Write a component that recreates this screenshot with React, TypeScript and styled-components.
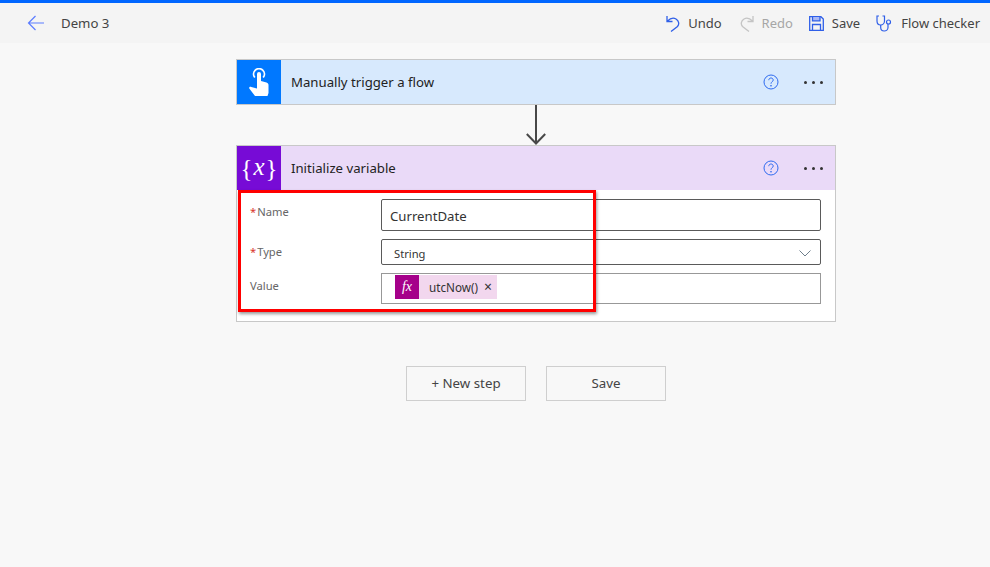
import React from "react";
import styled, { createGlobalStyle } from "styled-components";

const GlobalStyle = createGlobalStyle`
  html, body {
    margin: 0;
    padding: 0;
    height: 100%;
    background: #f8f8f8;
    font-family: "Noto Sans", "Open Sans", "Liberation Sans", sans-serif;
    overflow: hidden;
  }
`;

const Page = styled.div`
  min-height: 567px;
  background: #f8f8f8;
  border-top: 3px solid #0066ff;
  box-sizing: border-box;
`;

const Toolbar = styled.header`
  display: flex;
  align-items: center;
  justify-content: space-between;
  height: 40px;
  background: #f4f4f4;
  padding: 0 10px 0 27px;
`;

const TitleGroup = styled.div`
  display: flex;
  align-items: center;
  gap: 16px;
`;

const FlowName = styled.span`
  font-size: 13.2px;
  color: #444;
`;

const Actions = styled.div`
  display: flex;
  align-items: center;
  gap: 16px;
`;

const Action = styled.div<{ $disabled?: boolean; $trail?: number }>`
  display: flex;
  align-items: center;
  gap: 8px;
  margin-right: ${(p) => p.$trail ?? 0}px;
  font-size: 13px;
  color: ${(p) => (p.$disabled ? "#a6a6a6" : "#444")};
`;

const Canvas = styled.main`
  width: 600px;
  margin: 16px 0 0 236px;
`;

const Card = styled.section`
  position: relative;
  border: 1px solid #c8c8c8;
  background: #fff;
`;

const CardHeader = styled.div<{ $tint: string }>`
  display: flex;
  align-items: center;
  height: 44px;
  background: ${(p) => p.$tint};
`;

const IconBox = styled.div<{ $color: string }>`
  display: flex;
  align-items: center;
  justify-content: center;
  width: 44px;
  height: 44px;
  background: ${(p) => p.$color};
`;

const VariableMark = styled.div`
  display: flex;
  align-items: center;
  gap: 1px;
  color: #fff;
  font-family: "Liberation Serif", serif;
  font-size: 25px;
  line-height: 1;
  em {
    font-size: 25px;
    margin-top: -3px;
  }
`;

const CardTitle = styled.h2`
  flex: 1;
  margin: 0 0 0 10px;
  font-size: 13.2px;
  font-weight: 400;
  color: #222;
`;

const HeaderTools = styled.div`
  display: flex;
  align-items: center;
  gap: 25px;
  padding-right: 12px;
`;

const Dots = styled.div`
  display: flex;
  gap: 5px;
  span {
    width: 3px;
    height: 3px;
    border-radius: 50%;
    background: #333;
  }
`;

const Connector = styled.div`
  display: flex;
  justify-content: center;
  height: 40px;
`;

const Form = styled.div`
  display: flex;
  flex-direction: column;
  gap: 8px;
  padding: 9px 14px 17px 13px;
`;

const Row = styled.div`
  display: grid;
  grid-template-columns: 131px 1fr;
`;

const Label = styled.label`
  padding-top: 5px;
  font-size: 11.2px;
  line-height: 16px;
  color: #666;
`;

const Required = styled.span`
  color: #d9342b;
  margin-right: 1px;
`;

const Field = styled.div<{ $height: number; $soft?: boolean }>`
  display: flex;
  align-items: center;
  justify-content: space-between;
  box-sizing: border-box;
  height: ${(p) => p.$height}px;
  border: 1px solid ${(p) => (p.$soft ? "#989898" : "#5a5a5a")};
  border-radius: ${(p) => (p.$soft ? 0 : "2px")};
  background: #fff;
`;

const FieldText = styled.span<{ $size: number; $left: number }>`
  font-size: ${(p) => p.$size}px;
  margin: 2px 0 0 ${(p) => p.$left}px;
  color: #333;
`;

const Chevron = styled.span`
  display: flex;
  margin: 2px 9px 0 0;
`;

const Token = styled.div`
  display: flex;
  align-items: center;
  align-self: flex-start;
  height: 24px;
  margin: 1px 0 0 13px;
  background: #f2d7ee;
`;

const TokenIcon = styled.div`
  display: flex;
  align-items: center;
  justify-content: center;
  width: 24px;
  height: 24px;
  background: #a5008a;
  color: #fff;
  font-family: "Liberation Serif", serif;
  font-style: italic;
  font-size: 14px;
`;

const TokenText = styled.span`
  margin: 0 6px 0 10px;
  font-size: 11.7px;
  color: #333;
`;

const TokenClose = styled.span`
  margin-right: 5px;
  font-size: 14px;
  line-height: 1;
  color: #333;
`;

const Highlight = styled.div`
  position: absolute;
  left: 1px;
  top: 44px;
  width: 358px;
  height: 122px;
  box-sizing: border-box;
  border: 3px solid #ff0000;
  box-shadow: 1px 2px 3px rgba(0, 0, 0, 0.4);
  pointer-events: none;
`;

const Buttons = styled.div`
  display: flex;
  justify-content: center;
  gap: 20px;
  margin-top: 44px;
`;

const Button = styled.button`
  width: 120px;
  height: 35px;
  padding: 0 0 2px;
  border: 1px solid #cfcfcf;
  background: #f8f8f8;
  font-family: inherit;
  font-size: 13.3px;
  color: #444;
`;

const BackIcon = () => (
  <svg width="18" height="16" viewBox="0 0 18 16" fill="none" stroke="#5b7cff" strokeWidth="1.2">
    <path d="M17 8H2M8.5 1 1.500 8l7 7" />
  </svg>
);

const UndoIcon = () => (
  <svg width="14" height="17" viewBox="0 0 14 17" fill="none" stroke="#2f5fe8" strokeWidth="1.3">
    <path d="M1 1v5.500h5.500M1.500 6C4 3.500 7.500 2.500 10 4c3 2 3.500 5 1.500 7.500L5 16.500" />
  </svg>
);

const RedoIcon = () => (
  <svg width="14" height="17" viewBox="0 0 14 17" fill="none" stroke="#c4c4c4" strokeWidth="1.3">
    <path d="M13 1v5.500H7.500M12.500 6C10 3.500 6.500 2.500 4 4c-3 2-3.500 5-1.500 7.500L9 16.500" />
  </svg>
);

const SaveIcon = () => (
  <svg width="15" height="15" viewBox="0 0 15 15" fill="none" stroke="#2f5fe8" strokeWidth="1.3">
    <path d="M.7.7h11.200l2.400 2.400v11.200H.7z" />
    <path d="M3.500 1v3.800h7.500V1" fill="#a9b8f5" />
    <path d="M3.500 14V8.500h8V14" />
  </svg>
);

const StethoscopeIcon = () => (
  <svg width="17" height="17" viewBox="0 0 17 17" fill="none" stroke="#2f5fe8" strokeWidth="1.2">
    <path d="M3 1H1v5c0 2.500 1.800 4 3.700 4s3.800-1.500 3.800-4V1h-2" />
    <path d="M4.700 10v2.500c0 2 1.500 3.500 3.500 3.500s3.800-1.500 3.800-3.500V9" />
    <circle cx="12.500" cy="7" r="2" />
  </svg>
);

const TouchIcon = () => (
  <svg width="20" height="28" viewBox="0 0 20 28">
    <path
      d="M8 6a2 2 0 0 1 4 0v7l5.500 1.500c1.300.4 2 1.300 2 2.500v8l-1 3H6L.3 20.500c-.5-1 .5-2 2-1.500l5.700 1.500z"
      fill="#fff"
    />
    <path d="M5.800 9.500a5.400 5.400 0 1 1 8.400 0" fill="none" stroke="#fff" strokeWidth="1.800" />
  </svg>
);

const HelpIcon = () => (
  <svg width="16" height="16" viewBox="0 0 16 16" fill="none" stroke="#2f6bf0" strokeWidth="1">
    <circle cx="8" cy="8" r="7" />
    <path d="M5.800 6.200C5.800 4.800 6.800 4 8 4s2.200.8 2.200 2c0 1.800-2.200 1.800-2.200 3.700" />
    <circle cx="8" cy="11.800" r=".4" fill="#2f6bf0" />
  </svg>
);

const ChevronIcon = () => (
  <svg width="12" height="7" viewBox="0 0 12 7" fill="none" stroke="#6f7f8c" strokeWidth="1">
    <path d="M.5.500 6 6l5.500-5.500" />
  </svg>
);

const ArrowDown = () => (
  <svg width="20" height="40" viewBox="0 0 20 40" fill="none" stroke="#484848" strokeWidth="2">
    <path d="M10 0v38M.8 29 10 38.500 19.200 29" />
  </svg>
);

const HeaderActions = () => (
  <HeaderTools>
    <HelpIcon />
    <Dots>
      <span />
      <span />
      <span />
    </Dots>
  </HeaderTools>
);

export default function App() {
  return (
    <>
      <GlobalStyle />
      <Page>
        <Toolbar>
          <TitleGroup>
            <BackIcon />
            <FlowName>Demo 3</FlowName>
          </TitleGroup>
          <Actions>
            <Action $trail={2}>
              <UndoIcon />
              Undo
            </Action>
            <Action $disabled>
              <RedoIcon />
              Redo
            </Action>
            <Action>
              <SaveIcon />
              Save
            </Action>
            <Action>
              <StethoscopeIcon />
              Flow checker
            </Action>
          </Actions>
        </Toolbar>

        <Canvas>
          <Card>
            <CardHeader $tint="#d7e9fd">
              <IconBox $color="#0078ff">
                <TouchIcon />
              </IconBox>
              <CardTitle>Manually trigger a flow</CardTitle>
              <HeaderActions />
            </CardHeader>
          </Card>

          <Connector>
            <ArrowDown />
          </Connector>

          <Card>
            <CardHeader $tint="#eadaf8">
              <IconBox $color="#770bd6">
                <VariableMark>
                  {"{"}
                  <em>x</em>
                  {"}"}
                </VariableMark>
              </IconBox>
              <CardTitle>Initialize variable</CardTitle>
              <HeaderActions />
            </CardHeader>
            <Form>
              <Row>
                <Label>
                  <Required>*</Required>Name
                </Label>
                <Field $height={32}>
                  <FieldText $size={13.2} $left={8}>CurrentDate</FieldText>
                </Field>
              </Row>
              <Row>
                <Label>
                  <Required>*</Required>Type
                </Label>
                <Field $height={26}>
                  <FieldText $size={11.2} $left={12}>String</FieldText>
                  <Chevron>
                    <ChevronIcon />
                  </Chevron>
                </Field>
              </Row>
              <Row>
                <Label>Value</Label>
                <Field $height={31} $soft>
                  <Token>
                    <TokenIcon>fx</TokenIcon>
                    <TokenText>utcNow()</TokenText>
                    <TokenClose>×</TokenClose>
                  </Token>
                </Field>
              </Row>
            </Form>
            <Highlight />
          </Card>

          <Buttons>
            <Button>+ New step</Button>
            <Button>Save</Button>
          </Buttons>
        </Canvas>
      </Page>
    </>
  );
}
